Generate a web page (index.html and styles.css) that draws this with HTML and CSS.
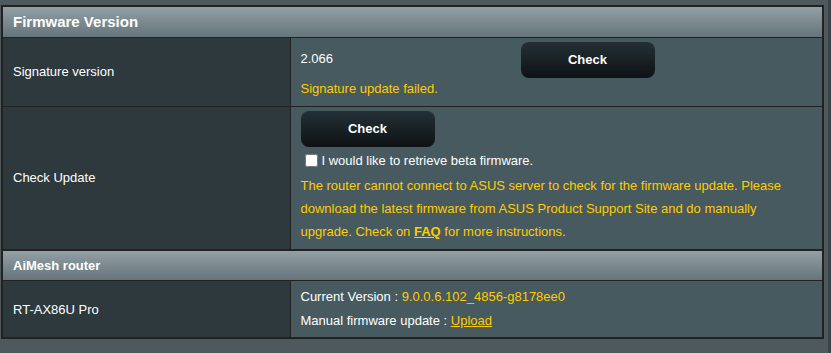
FILE: index.html
```html
<!DOCTYPE html>
<html lang="en">
<head>
    <meta charset="UTF-8">
    <meta name="viewport" content="width=device-width, initial-scale=1.0">
    <title>Firmware Upgrade</title>
    <link rel="stylesheet" href="styles.css">
</head>
<body>
    <div class="page">
        <table class="form-table">
            <thead>
                <tr>
                    <td colspan="2" class="title-big">Firmware Version</td>
                </tr>
            </thead>
            <tbody>
                <tr class="sig-row">
                    <th>Signature version</th>
                    <td>
                        <div class="sig-line">
                            <span class="sig-version">2.066</span>
                            <button type="button" class="button-gen">Check</button>
                        </div>
                        <div class="hint-red">Signature update failed.</div>
                    </td>
                </tr>
                <tr class="update-row">
                    <th>Check Update</th>
                    <td>
                        <button type="button" class="button-gen">Check</button>
                        <label class="beta-line">
                            <input type="checkbox" id="beta">
                            I would like to retrieve beta firmware.
                        </label>
                        <div class="hint-red notice">
                            The router cannot connect to ASUS server to check for the firmware update. Please download the latest firmware from ASUS Product Support Site and do manually upgrade. Check on <a href="#" class="faq-link">FAQ</a> for more instructions.
                        </div>
                    </td>
                </tr>
            </tbody>
            <thead>
                <tr>
                    <td colspan="2">AiMesh router</td>
                </tr>
            </thead>
            <tbody>
                <tr class="node-row">
                    <th>RT-AX86U Pro</th>
                    <td>
                        <div class="node-line">Current Version : <span class="hint-red">9.0.0.6.102_4856-g8178ee0</span></div>
                        <div class="node-line">Manual firmware update : <a href="#" class="upload-link">Upload</a></div>
                    </td>
                </tr>
            </tbody>
        </table>
    </div>
</body>
</html>
```

FILE: styles.css
```css
* {
    box-sizing: border-box;
    margin: 0;
    padding: 0;
}

body {
    font-family: Arial, "Liberation Sans", sans-serif;
    font-size: 13px;
    color: #fff;
    background-color: #4d595d;
    border-right: 3px solid #3a4448;
    min-height: 100vh;
}

.page {
    padding: 5px 0 0 1px;
}

.form-table {
    width: 823px;
    border-collapse: collapse;
    border: 2px solid #222;
}

.form-table thead td {
    background: linear-gradient(to bottom, #929fa4 0%, #66757b 100%);
    font-weight: bold;
    font-size: 13px;
    height: 31px;
    padding: 0 10px;
    border: 2px solid #222;
    border-bottom-width: 1px;
}

.form-table thead td.title-big {
    font-size: 15px;
}

.form-table th {
    width: 288px;
    text-align: left;
    font-weight: normal;
    background-color: #2e393e;
    padding: 0 10px;
    border: 1px solid #222;
}

.form-table tbody td {
    background-color: #475a5f;
    padding: 4px 10px;
    border: 1px solid #222;
    vertical-align: middle;
}

.button-gen {
    display: block;
    width: 134px;
    height: 36px;
    border: none;
    border-radius: 8px;
    background: linear-gradient(to bottom, #233036 0%, #0e1214 100%);
    color: #fff;
    font-family: Arial, "Liberation Sans", sans-serif;
    font-size: 13px;
    font-weight: bold;
    cursor: pointer;
}

.sig-line {
    display: flex;
    align-items: center;
}

.sig-version {
    width: 220px;
    margin-top: -2px;
}

.hint-red {
    color: #ffcc00;
}

.sig-row td .hint-red {
    line-height: 22px;
    padding-bottom: 2px;
}

.beta-line {
    display: flex;
    align-items: center;
    gap: 4px;
    margin-top: 4px;
    padding-left: 4px;
    line-height: 20px;
}

.beta-line input {
    width: 13px;
    height: 13px;
    margin: 0;
}

.notice {
    max-width: 490px;
    margin-top: 3px;
    line-height: 23px;
    padding-bottom: 2px;
}

.faq-link {
    color: #ffcc00;
    font-weight: bold;
    text-decoration: underline;
}

.node-row td {
    padding-top: 1px;
    padding-bottom: 1px;
}

.node-line {
    line-height: 24px;
}

.upload-link {
    color: #ffcc00;
    text-decoration: underline;
}
```
